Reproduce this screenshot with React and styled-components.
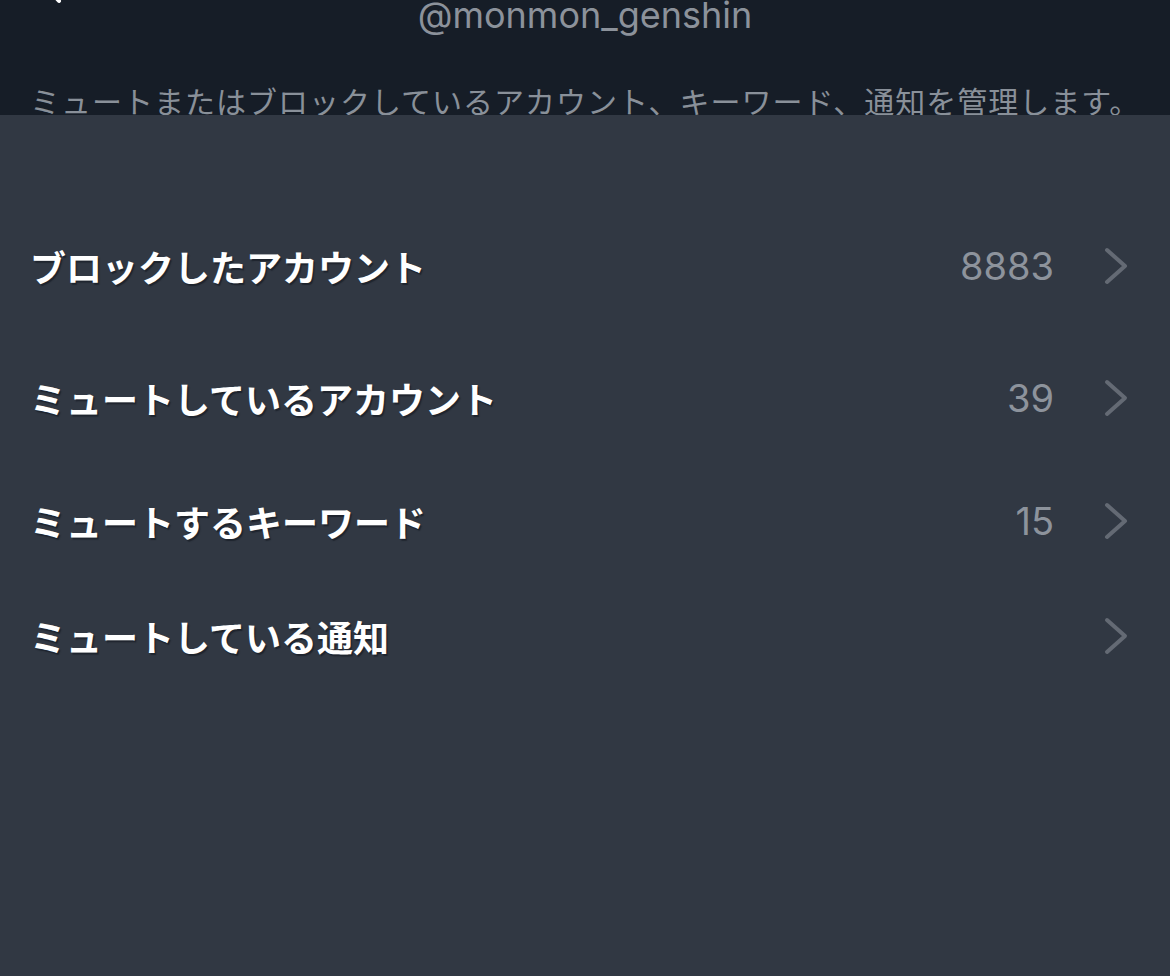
import React from "react";
import styled, { createGlobalStyle } from "styled-components";

const Global = createGlobalStyle`
  html, body {
    margin: 0;
    padding: 0;
    background: #313843;
  }
  body {
    font-family: Inter, "Noto Sans CJK JP", sans-serif;
    -webkit-font-smoothing: antialiased;
  }
  #root {
    min-height: 100vh;
  }
`;

const Page = styled.div`
  display: flex;
  flex-direction: column;
  min-height: 100vh;
  width: 1170px;
  background: #313843;
`;

const Header = styled.header`
  height: 115px;
  overflow: hidden;
  background: #161d27;
  display: flex;
  flex-direction: column;
  flex-shrink: 0;
`;

const TopBar = styled.div`
  margin-top: -3px;
  height: 36px;
  display: grid;
  grid-template-columns: 1fr auto 1fr;
  align-items: start;
`;

const BackButton = styled.div`
  padding-left: 40px;
  margin-top: -33px;
  display: flex;
`;

const Username = styled.div`
  font-family: Inter, "Noto Sans", sans-serif;
  font-size: 36px;
  line-height: 36px;
  color: #8c929b;
  letter-spacing: 0;
`;

const Description = styled.p`
  margin: 46px 0 0;
  padding: 0 30px;
  font-family: "Noto Sans CJK JP", sans-serif;
  font-size: 30px;
  line-height: 42px;
  letter-spacing: 1px;
  color: #899099;
  white-space: nowrap;
`;

const List = styled.ul`
  list-style: none;
  margin: 0;
  padding: 85px 0 0;
`;

const Row = styled.li`
  display: flex;
  align-items: center;
  height: ${(p) => p.$h}px;
  padding: 0 42px 0 30px;
`;

const Label = styled.span`
  flex: 1;
  font-family: "Noto Sans CJK JP", sans-serif;
  font-weight: 700;
  font-size: 36px;
  line-height: 44px;
  color: #ffffff;
  text-shadow: 1.5px 2px 1px rgba(18, 23, 31, 0.6);
`;

const Value = styled.span`
  font-family: Inter, "Noto Sans", sans-serif;
  font-size: 38px;
  line-height: 44px;
  color: #8d939c;
  margin-right: 50px;
`;

const Chevron = () => (
  <svg width="24" height="38" viewBox="0 0 24 38" fill="none">
    <path
      d="M3 3 L21 19 L3 35"
      stroke="#646a74"
      strokeWidth="4"
      strokeLinecap="round"
      strokeLinejoin="round"
    />
  </svg>
);

const BackChevron = () => (
  <svg width="22" height="40" viewBox="0 0 22 40" fill="none">
    <path
      d="M19 3 L4 20 L19 37"
      stroke="#ffffff"
      strokeWidth="4"
      strokeLinecap="round"
      strokeLinejoin="round"
    />
  </svg>
);

const items = [
  { label: "ブロックしたアカウント", value: "8883", h: 132 },
  { label: "ミュートしているアカウント", value: "39", h: 132 },
  { label: "ミュートするキーワード", value: "15", h: 114 },
  { label: "ミュートしている通知", value: "", h: 116 },
];

export default function App() {
  return (
    <>
      <Global />
      <Page>
        <Header>
          <TopBar>
            <BackButton>
              <BackChevron />
            </BackButton>
            <Username>@monmon_genshin</Username>
            <div />
          </TopBar>
          <Description>
            ミュートまたはブロックしているアカウント、キーワード、通知を管理します。
          </Description>
        </Header>
        <List>
          {items.map((it) => (
            <Row key={it.label} $h={it.h}>
              <Label>{it.label}</Label>
              {it.value && <Value>{it.value}</Value>}
              <Chevron />
            </Row>
          ))}
        </List>
      </Page>
    </>
  );
}
